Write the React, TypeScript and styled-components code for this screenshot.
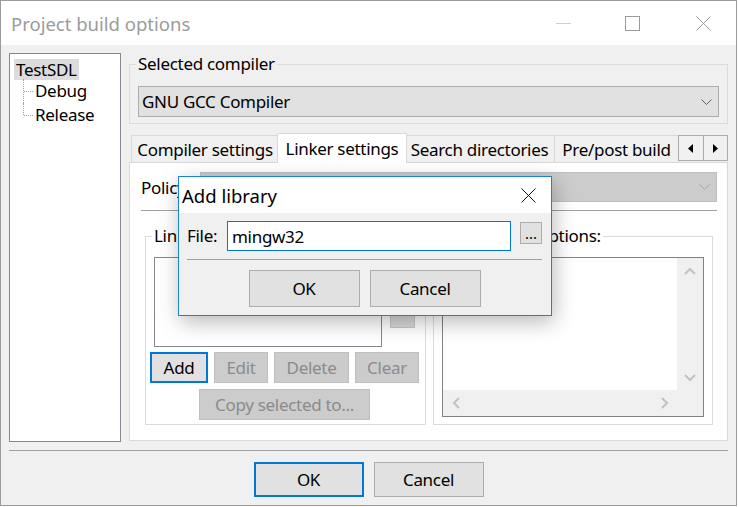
import React from "react";
import styled, { createGlobalStyle, css } from "styled-components";

const GlobalStyle = createGlobalStyle`
  *, *::before, *::after { box-sizing: border-box; }
  html, body { margin: 0; padding: 0; background: #ffffff; }
  body { font-family: "Noto Sans", "Open Sans", sans-serif; }
`;

const Window = styled.div`
  position: relative;
  width: 737px;
  height: 506px;
  border: 1px solid #9a9a9a;
  background: #f0f0f0;
  display: flex;
  flex-direction: column;
  font-family: "Noto Sans", "Open Sans", sans-serif;
  font-size: 17px;
  letter-spacing: -0.3px;
  color: #000;
  overflow: hidden;
`;

const TitleBar = styled.div`
  height: 44px;
  flex: none;
  background: #ffffff;
  display: flex;
  align-items: center;
`;

const TitleText = styled.div`
  padding-left: 10px;
  font-size: 18.5px;
  letter-spacing: 0;
  color: #9b9b9b;
`;

const CaptionButtons = styled.div`
  margin-left: auto;
  display: flex;
  height: 100%;
`;

const CaptionButton = styled.div<{ $w: number }>`
  width: ${(p) => p.$w}px;
  height: 100%;
  display: flex;
  align-items: center;
  justify-content: center;
`;

const MinGlyph = styled.span`
  width: 15px;
  height: 1px;
  background: #cfcfcf;
`;

const MaxGlyph = styled.span`
  width: 15px;
  height: 15px;
  border: 1px solid #9a9a9a;
`;

const Body = styled.div`
  flex: 1;
  display: flex;
  flex-direction: column;
  padding: 8px;
`;

const MainRow = styled.div`
  display: flex;
  gap: 8px;
  height: 389px;
  flex: none;
`;

const TreePanel = styled.div`
  width: 112px;
  flex: none;
  background: #ffffff;
  border: 1px solid #828790;
  padding-top: 4px;
`;

const TreeRoot = styled.div`
  height: 21px;
  padding-left: 4px;
`;

const TreeRootLabel = styled.span`
  display: inline-block;
  height: 21px;
  line-height: 21px;
  padding: 0 2px;
  background: #dcdcdc;
`;

const TreeChild = styled.div<{ $last?: boolean }>`
  position: relative;
  height: 24px;
  line-height: 24px;
  padding-left: 25px;
  &::before {
    content: "";
    position: absolute;
    left: 13px;
    top: 0;
    height: ${(p) => (p.$last ? 12 : 24)}px;
    border-left: 1px dotted #a0a0a0;
  }
  &::after {
    content: "";
    position: absolute;
    left: 14px;
    top: 12px;
    width: 9px;
    border-top: 1px dotted #a0a0a0;
  }
`;

const RightColumn = styled.div`
  flex: 1;
  min-width: 0;
  display: flex;
  flex-direction: column;
`;

const GroupBox = styled.fieldset<{ $pad: string; $w?: number }>`
  margin: 0;
  min-width: 0;
  border: 1px solid #dcdcdc;
  padding: ${(p) => p.$pad};
  flex: none;
  ${(p) =>
    p.$w &&
    css`
      width: ${p.$w}px;
    `}
`;

const Legend = styled.legend`
  padding: 0 2px;
  margin-left: -2px;
  height: 22px;
  line-height: 22px;
`;

const Combo = styled.div<{ $h: number; $disabled?: boolean }>`
  height: ${(p) => p.$h}px;
  display: flex;
  align-items: center;
  padding: 0 6px 0 3px;
  background: ${(p) => (p.$disabled ? "#cccccc" : "#e1e1e1")};
  border: 1px solid ${(p) => (p.$disabled ? "#bfbfbf" : "#adadad")};
  flex: 1;
  min-width: 0;
`;

const ComboText = styled.span`
  flex: 1;
  white-space: nowrap;
`;

const TabStrip = styled.div`
  display: flex;
  align-items: flex-end;
  height: 29px;
  margin-top: 9px;
  padding-left: 2px;
  flex: none;
`;

const Tab = styled.div<{ $w: number; $active?: boolean }>`
  position: relative;
  z-index: ${(p) => (p.$active ? 2 : 1)};
  flex: none;
  width: ${(p) => p.$w}px;
  height: ${(p) => (p.$active ? 30 : 27)}px;
  margin: ${(p) => (p.$active ? "0 -2px -1px -2px" : "0 0 0 -1px")};
  &:first-child {
    margin-left: 0;
  }
  background: ${(p) => (p.$active ? "#ffffff" : "#f0f0f0")};
  border: 1px solid #d9d9d9;
  border-bottom: none;
  display: flex;
  align-items: center;
  justify-content: center;
  white-space: nowrap;
`;

const Spin = styled.div`
  position: relative;
  z-index: 1;
  flex: none;
  display: flex;
  width: 50px;
  height: 26px;
  margin: 0 0 1px -1px;
  border: 1px solid #adadad;
  background: #f0f0f0;
`;

const SpinHalf = styled.div`
  flex: 1;
  display: flex;
  align-items: center;
  justify-content: center;
  & + & {
    border-left: 1px solid #adadad;
  }
`;

const TabPanel = styled.div`
  flex: 1;
  margin-bottom: 1px;
  background: #ffffff;
  border: 1px solid #d9d9d9;
  padding: 9px 10px 0 11px;
`;

const PolicyRow = styled.div`
  display: flex;
  align-items: center;
  height: 30px;
`;

const PolicyLabel = styled.div`
  width: 59px;
  flex: none;
`;

const HLine = styled.div<{ $mt: number }>`
  height: 1px;
  flex: none;
  margin-top: ${(p) => p.$mt}px;
  background: #a0a0a0;
`;

const GroupRow = styled.div`
  display: flex;
  gap: 7px;
  margin: 14px 4px 0;
`;

const ListRow = styled.div`
  display: flex;
`;

const ListBox = styled.div`
  width: 228px;
  height: 90px;
  flex: none;
  border: 1px solid #828790;
  background: #ffffff;
`;

const SideButtons = styled.div`
  display: flex;
  flex-direction: column;
  justify-content: center;
  gap: 4px;
  margin-left: 8px;
`;

const SmallButton = styled.div`
  width: 25px;
  height: 24px;
  background: #d9d9d9;
  border: 1px solid #c8c8c8;
`;

const ButtonRow = styled.div<{ $mt: number }>`
  display: flex;
  justify-content: center;
  gap: 6px;
  margin-top: ${(p) => p.$mt}px;
`;

const PushButton = styled.button<{ $w: number; $h: number; $default?: boolean }>`
  flex: none;
  width: ${(p) => p.$w}px;
  height: ${(p) => p.$h}px;
  padding: 0;
  font: inherit;
  letter-spacing: inherit;
  color: #000;
  background: #e1e1e1;
  border: ${(p) => (p.$default ? "2px solid #0078d7" : "1px solid #adadad")};
  white-space: nowrap;
  &:disabled {
    background: #cccccc;
    border: 1px solid #bfbfbf;
    color: #8b8b8b;
  }
`;

const TextArea = styled.div`
  height: 160px;
  border: 1px solid #828282;
  background: #ffffff;
  display: grid;
  grid-template-columns: 1fr 26px;
  grid-template-rows: 1fr 26px;
`;

const VScroll = styled.div`
  background: #f0f0f0;
  display: flex;
  flex-direction: column;
  justify-content: space-between;
`;

const HScroll = styled.div`
  background: #f0f0f0;
  display: flex;
  justify-content: space-between;
`;

const ScrollCorner = styled.div`
  background: #f0f0f0;
`;

const ArrowCell = styled.div`
  width: 26px;
  height: 26px;
  display: flex;
  align-items: center;
  justify-content: center;
`;

const FooterButtons = styled.div`
  display: flex;
  justify-content: center;
  gap: 10px;
  margin-top: 11px;
`;

const Dialog = styled.div`
  position: absolute;
  left: 177px;
  top: 175px;
  width: 374px;
  height: 140px;
  z-index: 10;
  border: 1px solid #1883d7;
  background: #f0f0f0;
  box-shadow: 2px 6px 20px rgba(0, 0, 0, 0.28);
  display: flex;
  flex-direction: column;
`;

const DialogTitleBar = styled.div`
  height: 36px;
  flex: none;
  background: #ffffff;
  display: flex;
  align-items: center;
  padding-left: 3px;
`;

const DialogTitle = styled.div`
  font-size: 18.5px;
  letter-spacing: 0;
`;

const DialogClose = styled.div`
  margin-left: auto;
  width: 46px;
  height: 100%;
  display: flex;
  align-items: center;
  justify-content: center;
`;

const DialogBody = styled.div`
  flex: 1;
  padding: 8px 9px 0 8px;
`;

const FileRow = styled.div`
  display: flex;
  align-items: flex-start;
  height: 30px;
`;

const FileLabel = styled.label`
  width: 40px;
  flex: none;
  line-height: 30px;
`;

const FileInput = styled.input`
  width: 284px;
  height: 30px;
  flex: none;
  margin: 0;
  padding: 0 0 0 4px;
  border: 1px solid #0078d7;
  outline: none;
  background: #ffffff;
  font: inherit;
  letter-spacing: inherit;
  color: #000;
`;

const EllipsisButton = styled.button`
  width: 22px;
  height: 22px;
  flex: none;
  margin: 1px 0 0 9px;
  padding: 0 0 2px;
  font: inherit;
  font-size: 15px;
  letter-spacing: 0;
  line-height: 1;
  display: flex;
  align-items: flex-end;
  justify-content: center;
  background: #e1e1e1;
  border: 1px solid #adadad;
  color: #000;
`;

const DialogButtons = styled.div`
  display: flex;
  justify-content: center;
  gap: 10px;
  margin-top: 10px;
`;

type Dir = "up" | "down" | "left" | "right";

const chevronPoints: Record<Dir, string> = {
  up: "1,7 6,2 11,7",
  down: "1,2 6,7 11,2",
  left: "7,1 2,6 7,11",
  right: "2,1 7,6 2,11",
};

const Chevron = ({ dir }: { dir: Dir }) => {
  const horiz = dir === "up" || dir === "down";
  return (
    <svg
      width={horiz ? 12 : 9}
      height={horiz ? 9 : 12}
      viewBox={horiz ? "0 0 12 9" : "0 0 9 12"}
    >
      <polyline points={chevronPoints[dir]} fill="none" stroke="#c2c2c2" strokeWidth={2} />
    </svg>
  );
};

const ComboArrow = ({ color }: { color: string }) => (
  <svg width="11" height="6" viewBox="0 0 11 6">
    <polyline points="0.5,0.5 5.5,5.5 10.5,0.5" fill="none" stroke={color} strokeWidth={1} />
  </svg>
);

const CloseGlyph = ({ color }: { color: string }) => (
  <svg width="15" height="15" viewBox="0 0 15 15">
    <path d="M0.5 0.5 L14.5 14.5 M14.5 0.5 L0.5 14.5" stroke={color} strokeWidth={1} fill="none" />
  </svg>
);

const SpinArrow = ({ dir }: { dir: "left" | "right" }) => (
  <svg width="5" height="9" viewBox="0 0 5 9">
    <polygon points={dir === "left" ? "5,0 0,4.5 5,9" : "0,0 5,4.5 0,9"} fill="#000" />
  </svg>
);

export default function App() {
  return (
    <>
      <GlobalStyle />
      <Window>
        <TitleBar>
          <TitleText>Project build options</TitleText>
          <CaptionButtons>
            <CaptionButton $w={62}>
              <MinGlyph />
            </CaptionButton>
            <CaptionButton $w={76}>
              <MaxGlyph />
            </CaptionButton>
            <CaptionButton $w={66}>
              <CloseGlyph color="#9a9a9a" />
            </CaptionButton>
          </CaptionButtons>
        </TitleBar>
        <Body>
          <MainRow>
            <TreePanel>
              <TreeRoot>
                <TreeRootLabel>TestSDL</TreeRootLabel>
              </TreeRoot>
              <TreeChild>Debug</TreeChild>
              <TreeChild $last>Release</TreeChild>
            </TreePanel>
            <RightColumn>
              <GroupBox $pad="11px 8px 6px">
                <Legend>Selected compiler</Legend>
                <Combo $h={31}>
                  <ComboText>GNU GCC Compiler</ComboText>
                  <ComboArrow color="#606060" />
                </Combo>
              </GroupBox>
              <TabStrip>
                <Tab $w={148}>Compiler settings</Tab>
                <Tab $w={130} $active>
                  Linker settings
                </Tab>
                <Tab $w={151}>Search directories</Tab>
                <Tab $w={125}>Pre/post build</Tab>
                <Spin>
                  <SpinHalf>
                    <SpinArrow dir="left" />
                  </SpinHalf>
                  <SpinHalf>
                    <SpinArrow dir="right" />
                  </SpinHalf>
                </Spin>
              </TabStrip>
              <TabPanel>
                <PolicyRow>
                  <PolicyLabel>Policy:</PolicyLabel>
                  <Combo $h={30} $disabled>
                    <ComboText />
                    <ComboArrow color="#a8a8a8" />
                  </Combo>
                </PolicyRow>
                <HLine $mt={8} />
                <GroupRow>
                  <GroupBox $pad="10px 10px 4px 8px" $w={281}>
                    <Legend>Link libraries:</Legend>
                    <ListRow>
                      <ListBox />
                      <SideButtons>
                        <SmallButton />
                        <SmallButton />
                      </SideButtons>
                    </ListRow>
                    <ButtonRow $mt={5}>
                      <PushButton $w={58} $h={31} $default>
                        Add
                      </PushButton>
                      <PushButton $w={54} $h={31} disabled>
                        Edit
                      </PushButton>
                      <PushButton $w={75} $h={31} disabled>
                        Delete
                      </PushButton>
                      <PushButton $w={64} $h={31} disabled>
                        Clear
                      </PushButton>
                    </ButtonRow>
                    <ButtonRow $mt={6}>
                      <PushButton $w={171} $h={31} disabled>
                        Copy selected to...
                      </PushButton>
                    </ButtonRow>
                  </GroupBox>
                  <GroupBox $pad="10px 8px 7px 8px" $w={280}>
                    <Legend>Other linker options:</Legend>
                    <TextArea>
                      <div />
                      <VScroll>
                        <ArrowCell>
                          <Chevron dir="up" />
                        </ArrowCell>
                        <ArrowCell>
                          <Chevron dir="down" />
                        </ArrowCell>
                      </VScroll>
                      <HScroll>
                        <ArrowCell>
                          <Chevron dir="left" />
                        </ArrowCell>
                        <ArrowCell>
                          <Chevron dir="right" />
                        </ArrowCell>
                      </HScroll>
                      <ScrollCorner />
                    </TextArea>
                  </GroupBox>
                </GroupRow>
              </TabPanel>
            </RightColumn>
          </MainRow>
          <HLine $mt={8} />
          <FooterButtons>
            <PushButton $w={110} $h={35} $default>
              OK
            </PushButton>
            <PushButton $w={110} $h={35}>
              Cancel
            </PushButton>
          </FooterButtons>
        </Body>
        <Dialog>
          <DialogTitleBar>
            <DialogTitle>Add library</DialogTitle>
            <DialogClose>
              <CloseGlyph color="#111111" />
            </DialogClose>
          </DialogTitleBar>
          <DialogBody>
            <FileRow>
              <FileLabel htmlFor="lib-file">File:</FileLabel>
              <FileInput id="lib-file" value="mingw32" readOnly />
              <EllipsisButton>...</EllipsisButton>
            </FileRow>
            <HLine $mt={8} />
            <DialogButtons>
              <PushButton $w={111} $h={37}>
                OK
              </PushButton>
              <PushButton $w={111} $h={37}>
                Cancel
              </PushButton>
            </DialogButtons>
          </DialogBody>
        </Dialog>
      </Window>
    </>
  );
}
